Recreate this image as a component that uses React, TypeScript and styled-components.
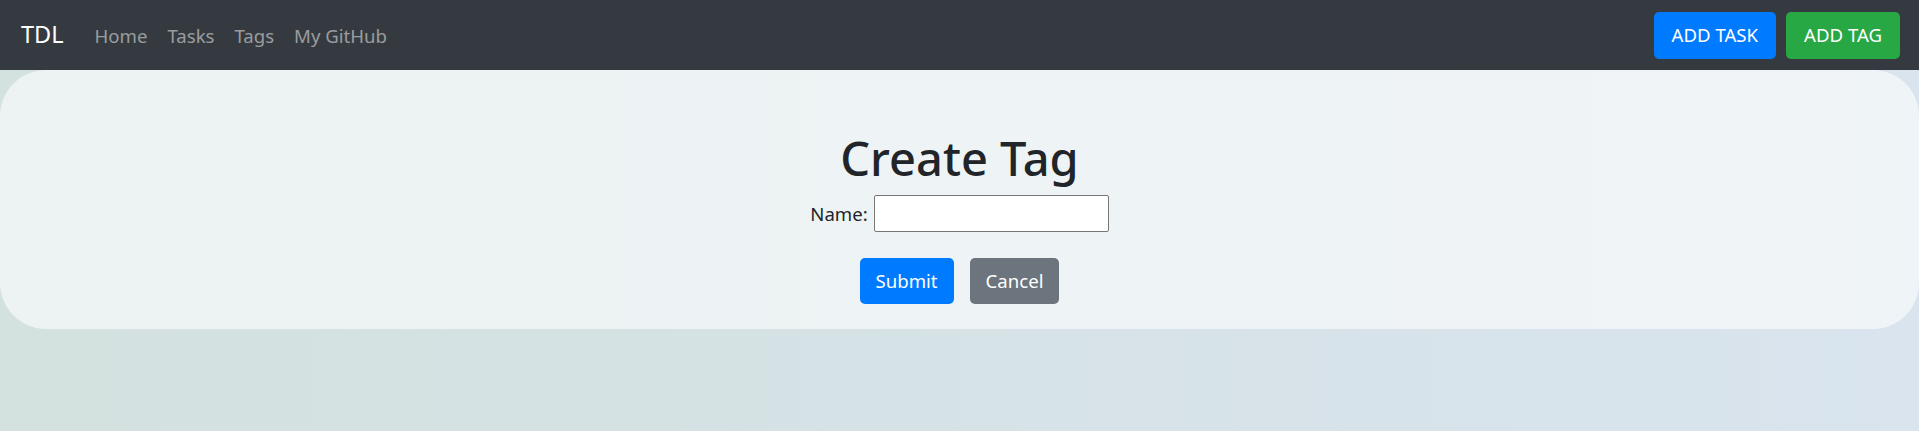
import React from "react";
import styled, { createGlobalStyle } from "styled-components";

const GlobalStyle = createGlobalStyle`
  html, body {
    margin: 0;
    padding: 0;
  }
  body {
    min-height: 100vh;
    background: linear-gradient(to right, #d3e1df, #d9e4ee);
    font-family: "Segoe UI", "Noto Sans", "Open Sans", sans-serif;
    color: #212529;
  }
`;

const Navbar = styled.nav`
  display: flex;
  align-items: center;
  height: 70px;
  padding: 0 19px 0 21px;
  background: #343a40;
  box-sizing: border-box;
`;

const Brand = styled.a`
  font-size: 23.5px;
  color: #fff;
  text-decoration: none;
  margin-right: 21px;
  line-height: 1;
`;

const NavList = styled.div`
  display: flex;
  align-items: center;
  flex: 1;
`;

const NavLink = styled.a`
  font-size: 18.6px;
  color: rgba(255, 255, 255, 0.5);
  text-decoration: none;
  padding: 0 10px;
`;

const NavActions = styled.div`
  display: flex;
  gap: 10px;
`;

const Button = styled.button<{ $variant: "primary" | "success" | "secondary" }>`
  font-family: inherit;
  font-size: 18.6px;
  line-height: 1.5;
  height: 47px;
  padding: 0 18px;
  border: none;
  border-radius: 5px;
  color: #fff;
  cursor: pointer;
  background: ${(p) =>
    p.$variant === "primary" ? "#007bff" : p.$variant === "success" ? "#28a745" : "#6c757d"};
`;

const Card = styled.main`
  height: 259px;
  box-sizing: border-box;
  border-radius: 46px;
  background: rgba(255, 255, 255, 0.58);
  display: flex;
  flex-direction: column;
  align-items: center;
  padding-top: 60px;
`;

const Title = styled.h1`
  margin: 0;
  font-size: 47px;
  font-weight: 500;
  line-height: 1.2;
`;

const Field = styled.div`
  display: flex;
  align-items: center;
  gap: 6px;
  font-size: 18.6px;
  margin-top: 9px;
`;

const Input = styled.input`
  width: 235px;
  height: 37px;
  box-sizing: border-box;
  border: 1px solid #767676;
  border-radius: 2px;
  background: #fff;
  font-size: 18.6px;
  padding: 0 4px;
`;

const Actions = styled.div`
  display: flex;
  gap: 16px;
  margin-top: 26px;
`;

const FormButton = styled(Button)`
  height: 46px;
  padding: 0 16px;
`;

export default function App() {
  return (
    <>
      <GlobalStyle />
      <Navbar>
        <Brand href="#">TDL</Brand>
        <NavList>
          <NavLink href="#">Home</NavLink>
          <NavLink href="#">Tasks</NavLink>
          <NavLink href="#">Tags</NavLink>
          <NavLink href="#">My GitHub</NavLink>
        </NavList>
        <NavActions>
          <Button $variant="primary">ADD TASK</Button>
          <Button $variant="success">ADD TAG</Button>
        </NavActions>
      </Navbar>
      <Card>
        <Title>Create Tag</Title>
        <Field>
          <label htmlFor="name">Name:</label>
          <Input id="name" type="text" />
        </Field>
        <Actions>
          <FormButton $variant="primary">Submit</FormButton>
          <FormButton $variant="secondary">Cancel</FormButton>
        </Actions>
      </Card>
    </>
  );
}
